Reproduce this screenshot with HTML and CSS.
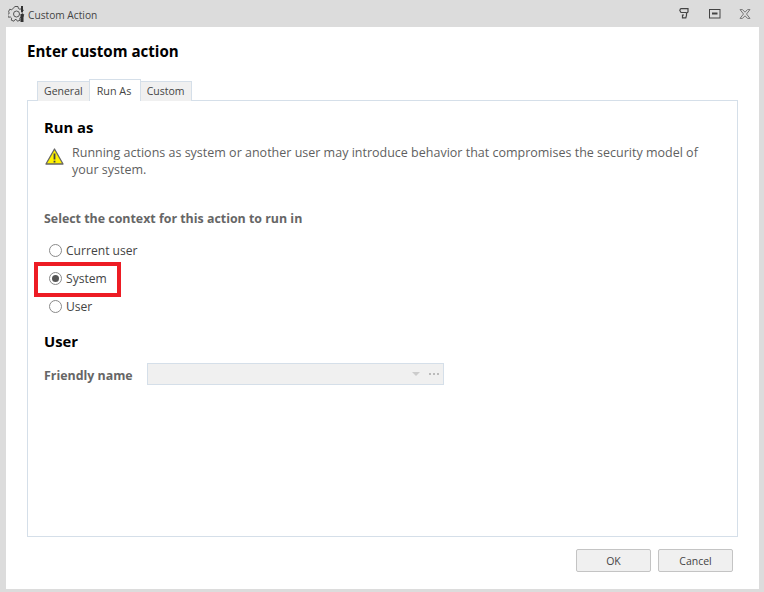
FILE: index.html
```html
<!DOCTYPE html>
<html lang="en">
<head>
<meta charset="utf-8">
<title>Custom Action</title>
<link rel="stylesheet" href="styles.css">
</head>
<body>
<div class="window">
  <div class="titlebar">
    <svg class="app-icon" width="18" height="18" viewBox="0 0 18 18" fill="none" stroke="#555" stroke-width="1">
      <path d="M7 1.500h3l.4 2 1.600.8 1.800-1 1.600 2.200-1.400 1.500.2 1.600 1.600 1-1 2.600-2-.2-1.100 1.300.3 2-2.600.9-1.100-1.700H7l-1.100 1.700-2.600-1 .3-2-1.200-1.200-2 .2-.9-2.600 1.700-1.100V7.900L.5 6.800l1.200-2.500 2 .4 1.200-1.100z"/>
      <circle cx="8.500" cy="9" r="3"/>
      <path d="M14 1v6" stroke="#333" stroke-width="2"/>
      <path d="M14 9v8" stroke="#333" stroke-width="3"/>
    </svg>
    <span class="title">Custom Action</span>
    <div class="controls">
      <svg class="pin" width="10" height="11" viewBox="0 0 10 11" fill="none" stroke="#444" stroke-width="1.200"><path d="M1.500.7h7.500v3.300L7.500 5.200v2.300L6.800 9.800H3.500V7H5M1.500.7 .8 2.500l1.200 2h5.500"/></svg>
      <svg width="12" height="10" viewBox="0 0 12 10" fill="none" stroke="#444"><rect x=".5" y=".5" width="10.500" height="8.500" stroke-width="1"/><path d="M3 4.500h5.500" stroke-width="2"/></svg>
      <svg width="12" height="10" viewBox="0 0 12 10" fill="none" stroke="#777" stroke-width="1"><path d="M1 .6h2.500L6 3.200 8.500.6H11L7.500 5 11 9.400H8.500L6 6.800 3.500 9.400H1L4.500 5z"/></svg>
    </div>
  </div>
  <div class="dialog">
    <h1 class="heading">Enter custom action</h1>
    <div class="tabs">
      <div class="tab">General</div>
      <div class="tab active">Run As</div>
      <div class="tab">Custom</div>
    </div>
    <div class="panel">
      <h2 class="section first">Run as</h2>
      <div class="warning">
        <svg class="warn-icon" width="19" height="17" viewBox="0 0 19 17">
          <path d="M9.500 1 18 16H1z" fill="#fff200" stroke="#666" stroke-width="1.300" stroke-linejoin="round"/>
          <path d="M9.500 5.500v6" stroke="#444" stroke-width="1.800"/>
          <path d="M9.500 12.700v1.800" stroke="#444" stroke-width="1.800"/>
        </svg>
        <p class="warn-text">Running actions as system or another user may introduce behavior that compromises the security model of your system.</p>
      </div>
      <div class="label context">Select the context for this action to run in</div>
      <div class="radios">
        <div class="radio-row"><span class="radio"></span>Current user</div>
        <div class="radio-row"><span class="radio checked"></span>System<span class="highlight"></span></div>
        <div class="radio-row"><span class="radio"></span>User</div>
      </div>
      <h2 class="section user">User</h2>
      <div class="field-row">
        <span class="label">Friendly name</span>
        <div class="combo">
          <span class="arrow"></span>
          <span class="dots"><i></i><i></i><i></i></span>
        </div>
      </div>
    </div>
    <div class="footer">
      <button class="btn" type="button">OK</button>
      <button class="btn" type="button">Cancel</button>
    </div>
  </div>
</div>
</body>
</html>
```
FILE: styles.css
```css
* { box-sizing: border-box; }
html, body { margin: 0; padding: 0; }
body { width: 764px; height: 592px; overflow: hidden; font-family: "Open Sans", "Noto Sans", sans-serif; background: #dcdcdc; color: #444; }
.window { display: flex; flex-direction: column; width: 764px; height: 592px; padding: 0 5px 3px 6px; }
.titlebar { display: flex; align-items: center; height: 27px; flex: none; margin-left: 2px; }
.app-icon { flex: none; }
.title { margin-left: 2px; padding-top: 2px; font-size: 10.200px; color: #444; }
.controls { margin-left: auto; display: flex; align-items: center; gap: 18px; margin-right: 8px; }
.pin { margin-right: 2px; }
.dialog { flex: 1; background: #fff; display: flex; flex-direction: column; padding: 0 21px 0 21px; }
.heading { margin: 14px 0 0; font-size: 15.100px; line-height: 21px; font-weight: 700; color: #000; }
.tabs { display: flex; margin: 17px 0 0 10px; height: 22px; align-items: flex-end; position: relative; z-index: 1; margin-bottom: -1px; }
.tab { height: 20px; padding: 0 6px; font-size: 10.500px; line-height: 19px; color: #444; background: #f0f0f0; border: 1px solid #d5dfe9; border-bottom: 0; margin-right: -1px; }
.tab.active { height: 22px; background: #fff; line-height: 21px; padding: 0 7px; font-size: 10.800px; width: 52px; }
.panel { height: 437px; border: 1px solid #d5dfe9; padding: 0 16px; flex: none; }
.section { margin: 0; font-size: 14.800px; font-weight: 700; color: #000; line-height: 20px; }
.section.first { margin-top: 16px; }
.warning { display: flex; margin-top: 7px; }
.warn-icon { flex: none; margin: 4px 0 0 1px; }
.warn-text { margin: 0 0 0 8px; font-size: 12.500px; line-height: 17px; color: #5f5f5f; }
.label { font-size: 12.400px; font-weight: 700; color: #666; }
.context { margin-top: 32px; line-height: 17px; }
.radios { margin-top: 9px; }
.radio-row { position: relative; display: flex; align-items: center; height: 28px; padding-left: 5px; font-size: 12.100px; color: #444; }
.radio { width: 13px; height: 13px; margin-right: 4px; border: 1px solid #8a8a8a; border-radius: 50%; background: #fff; display: flex; align-items: center; justify-content: center; }
.radio.checked::after { content: ""; width: 7px; height: 7px; border-radius: 50%; background: #555; }
.highlight { position: absolute; left: -10px; top: -2px; width: 87px; height: 35px; border: 4px solid #ed1c24; }
.section.user { margin-top: 11px; }
.field-row { display: flex; align-items: center; margin-top: 12px; }
.field-row .label { width: 103px; padding-top: 2px; }
.combo { width: 297px; height: 22px; background: #f0f0f0; border: 1px solid #d5dfe9; display: flex; align-items: center; justify-content: flex-end; padding-right: 4px; }
.arrow { width: 0; height: 0; border-left: 4px solid transparent; border-right: 4px solid transparent; border-top: 4px solid #ccc; margin-right: 9px; }
.dots { display: flex; gap: 2px; }
.dots i { display: block; width: 2px; height: 2px; background: #bbb; }
.footer { display: flex; justify-content: flex-end; gap: 7px; padding: 12px 5px 0 0; }
.btn { width: 75px; height: 23px; padding: 0; border: 1px solid #c4c4c4; border-radius: 2px; background: #f0f0f0; color: #444; font: 10.500px "Open Sans", "Noto Sans", sans-serif; }
```
